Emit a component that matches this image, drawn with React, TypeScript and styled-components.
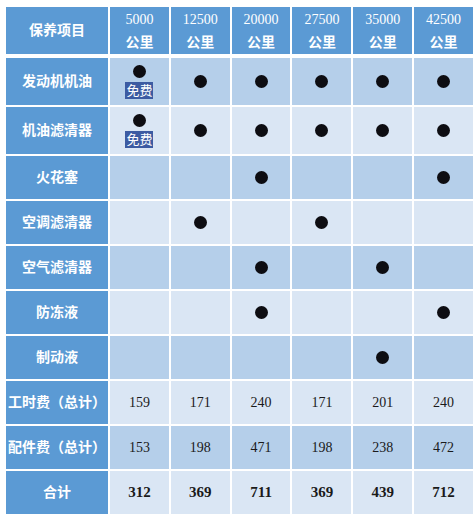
import styled, { createGlobalStyle } from "styled-components";

const GlobalStyle = createGlobalStyle`
  body {
    margin: 0;
    background: #ffffff;
    font-family: "Liberation Serif", "Noto Sans CJK SC", serif;
  }
`;

const Page = styled.div`
  padding: 7px 0 0 6px;
`;
const Table = styled.div`
  width: 467px;
  display: flex;
  flex-direction: column;
  gap: 4px;
`;
const Row = styled.div<{ $height: number }>`
  display: grid;
  grid-template-columns: 102px repeat(6, 1fr);
  column-gap: 2px;
  height: ${(props) => props.$height}px;
`;
const Body = styled.div`
  display: flex;
  flex-direction: column;
  gap: 2px;
`;
const HeadCell = styled.div`
  background: #5b9ad4;
  color: #ffffff;
  font-size: 14px;
  font-weight: 700;
  line-height: 23px;
  white-space: nowrap;
  display: flex;
  flex-direction: column;
  align-items: center;
  justify-content: center;
  text-align: center;
`;
const Km = styled.span`
  font-weight: 400;
`;
const DataCell = styled.div<{ $dark: boolean; $bold?: boolean }>`
  background: ${(props) => (props.$dark ? "#b5cfea" : "#dae6f4")};
  color: #1a1a1a;
  font-size: ${(props) => (props.$bold ? 15 : 14)}px;
  font-weight: ${(props) => (props.$bold ? 700 : 400)};
  display: flex;
  flex-direction: column;
  align-items: center;
  justify-content: center;
  gap: 4px;
`;
const Dot = styled.span`
  width: 13px;
  height: 13px;
  border-radius: 50%;
  background: #0d0d12;
`;
const Badge = styled.span`
  background: #3c5ba2;
  color: #ffffff;
  font-size: 13px;
  line-height: 17px;
  padding: 0 1px;
`;

const columns = ["5000", "12500", "20000", "27500", "35000", "42500"];

interface IRow {
  name: string;
  marks?: number[];
  values?: string[];
  free?: boolean;
  bold?: boolean;
  height: number;
}

const rows: IRow[] = [
  { name: "发动机机油", marks: [0, 1, 2, 3, 4, 5], free: true, height: 47 },
  { name: "机油滤清器", marks: [0, 1, 2, 3, 4, 5], free: true, height: 47 },
  { name: "火花塞", marks: [2, 5], height: 43 },
  { name: "空调滤清器", marks: [1, 3], height: 43 },
  { name: "空气滤清器", marks: [2, 4], height: 43 },
  { name: "防冻液", marks: [2, 5], height: 43 },
  { name: "制动液", marks: [4], height: 43 },
  { name: "工时费（总计）", values: ["159", "171", "240", "171", "201", "240"], height: 43 },
  { name: "配件费（总计）", values: ["153", "198", "471", "198", "238", "472"], height: 43 },
  { name: "合计", values: ["312", "369", "711", "369", "439", "712"], bold: true, height: 43 },
];

function App() {
  return (
    <Page>
      <GlobalStyle />
      <Table>
        <Row $height={47}>
          <HeadCell>保养项目</HeadCell>
          {columns.map((km) => (
            <HeadCell key={km}>
              <Km>{km}</Km>
              <span>公里</span>
            </HeadCell>
          ))}
        </Row>
        <Body>
          {rows.map((row, r) => (
            <Row key={row.name} $height={row.height}>
              <HeadCell>{row.name}</HeadCell>
              {columns.map((km, c) => (
                <DataCell key={km} $dark={r % 2 === 0} $bold={row.bold}>
                  {row.values && row.values[c]}
                  {row.marks?.includes(c) && <Dot />}
                  {row.free && c === 0 && <Badge>免费</Badge>}
                </DataCell>
              ))}
            </Row>
          ))}
        </Body>
      </Table>
    </Page>
  );
}

export default App;
